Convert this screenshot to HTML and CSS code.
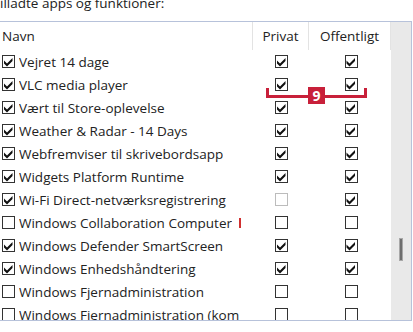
FILE: index.html
```html
<!DOCTYPE html>
<html lang="da">
<head>
  <meta charset="UTF-8">
  <title>Tilladte apps og funktioner</title>
  <link rel="stylesheet" href="styles.css">
</head>
<body>

  <div class="title">illadte apps og funktioner:</div>

  <div class="list">
    <div class="cols">
      <div class="head">
        <div class="h h-name">Navn</div>
        <div class="h h-priv">Privat</div>
        <div class="h h-pub">Offentligt</div>
      </div>

      <div class="row">
        <div class="name"><span class="cb on"></span><span class="label">Vejret 14 dage</span></div>
        <div class="c"><span class="cb on"></span></div>
        <div class="c"><span class="cb on"></span></div>
      </div>
      <div class="row">
        <div class="name"><span class="cb on"></span><span class="label">VLC media player</span></div>
        <div class="c"><span class="cb on"></span></div>
        <div class="c"><span class="cb on"></span></div>
      </div>
      <div class="row">
        <div class="name"><span class="cb on"></span><span class="label">Vært til Store-oplevelse</span></div>
        <div class="c"><span class="cb on"></span></div>
        <div class="c"><span class="cb on"></span></div>
      </div>
      <div class="row">
        <div class="name"><span class="cb on"></span><span class="label">Weather &amp; Radar - 14 Days</span></div>
        <div class="c"><span class="cb on"></span></div>
        <div class="c"><span class="cb on"></span></div>
      </div>
      <div class="row">
        <div class="name"><span class="cb on"></span><span class="label">Webfremviser til skrivebordsapp</span></div>
        <div class="c"><span class="cb on"></span></div>
        <div class="c"><span class="cb on"></span></div>
      </div>
      <div class="row">
        <div class="name"><span class="cb on"></span><span class="label">Widgets Platform Runtime</span></div>
        <div class="c"><span class="cb on"></span></div>
        <div class="c"><span class="cb on"></span></div>
      </div>
      <div class="row">
        <div class="name"><span class="cb on"></span><span class="label">Wi-Fi Direct-netværksregistrering</span></div>
        <div class="c"><span class="cb dim"></span></div>
        <div class="c"><span class="cb on"></span></div>
      </div>
      <div class="row">
        <div class="name"><span class="cb"></span><span class="label">Windows Collaboration Computer</span></div>
        <div class="c"><span class="cb"></span></div>
        <div class="c"><span class="cb"></span></div>
      </div>
      <div class="row">
        <div class="name"><span class="cb on"></span><span class="label">Windows Defender SmartScreen</span></div>
        <div class="c"><span class="cb on"></span></div>
        <div class="c"><span class="cb on"></span></div>
      </div>
      <div class="row">
        <div class="name"><span class="cb on"></span><span class="label">Windows Enhedshåndtering</span></div>
        <div class="c"><span class="cb on"></span></div>
        <div class="c"><span class="cb on"></span></div>
      </div>
      <div class="row">
        <div class="name"><span class="cb"></span><span class="label">Windows Fjernadministration</span></div>
        <div class="c"><span class="cb"></span></div>
        <div class="c"><span class="cb"></span></div>
      </div>
      <div class="row">
        <div class="name"><span class="cb"></span><span class="label">Windows Fjernadministration (kom</span></div>
        <div class="c"><span class="cb"></span></div>
        <div class="c"><span class="cb"></span></div>
      </div>
    </div>

    <div class="scroll"><div class="thumb"></div></div>

    <!-- røde markeringer fra artiklen -->
    <div class="bracket"></div>
    <div class="badge">9</div>
    <div class="tick"></div>
  </div>

</body>
</html>
```

FILE: styles.css
```css
* { box-sizing: border-box; margin: 0; padding: 0; }
body {
  font-family: 'Open Sans', 'Noto Sans', sans-serif;
  font-size: 13.5px;
  color: #222;
  background: #fff;
  width: 413px;
  height: 332px;
  overflow: hidden;
}
.title {
  height: 27px;
  line-height: 18px;
  margin-top: -6px;
  white-space: nowrap;
}
.list {
  position: relative;
  display: flex;
  width: 412px;
  height: 300px;
  border-top: 1px solid #b7c2da;
  border-right: 1px solid #b7c2da;
  border-bottom: 1px solid #b7c2da;
  overflow: hidden;
}
.cols {
  width: 391px;
  flex: none;
  overflow: hidden;
}
.head, .row {
  display: grid;
  grid-template-columns: 252px 56px 83px;
}
.head {
  height: 28px;
  align-items: center;
}
.h {
  height: 28px;
  line-height: 28px;
  text-align: center;
}
.h-name { text-align: left; padding-left: 2px; }
.h-priv { border-left: 1px solid #e3e3e3; }
.h-pub { border-left: 1px solid #e3e3e3; border-right: 1px solid #e3e3e3; }
.row {
  height: 23px;
  align-items: center;
}
.name {
  display: flex;
  align-items: center;
  gap: 4px;
  padding-left: 2px;
  padding-right: 8px;
  white-space: nowrap;
}
.label {
  min-width: 0;
  overflow: hidden;
}
.c {
  display: flex;
  justify-content: center;
  padding-left: 3px;
}
.cb {
  display: block;
  flex: none;
  width: 13px;
  height: 13px;
  border: 1px solid #333;
  background: #fff;
  position: relative;
}
.cb.dim { border-color: #bcbcbc; }
.cb.on::after {
  content: "";
  position: absolute;
  inset: 0;
  background: #111;
  clip-path: polygon(1px 4.5px, 4px 7.5px, 9.5px 2px, 9.5px 5px, 4px 10.5px, 1px 7.5px);
}
.scroll {
  width: 20px;
  flex: none;
  background: #e9e9e9;
  display: flex;
  justify-content: center;
  padding-top: 216px;
}
.thumb {
  width: 4px;
  height: 23px;
  background: #6e6e6e;
  border: 1px solid #a8a8a8;
}
.bracket {
  position: absolute;
  left: 266px;
  top: 66px;
  width: 101px;
  height: 10px;
  border: 3px solid #c8203a;
  border-top: none;
}
.badge {
  position: absolute;
  left: 308px;
  top: 65px;
  width: 17px;
  height: 17px;
  background: #c8203a;
  color: #fff;
  font-weight: 700;
  font-size: 14px;
  line-height: 17px;
  text-align: center;
}
.tick {
  position: absolute;
  left: 239px;
  top: 196px;
  width: 2px;
  height: 10px;
  background: #d03030;
}
```
